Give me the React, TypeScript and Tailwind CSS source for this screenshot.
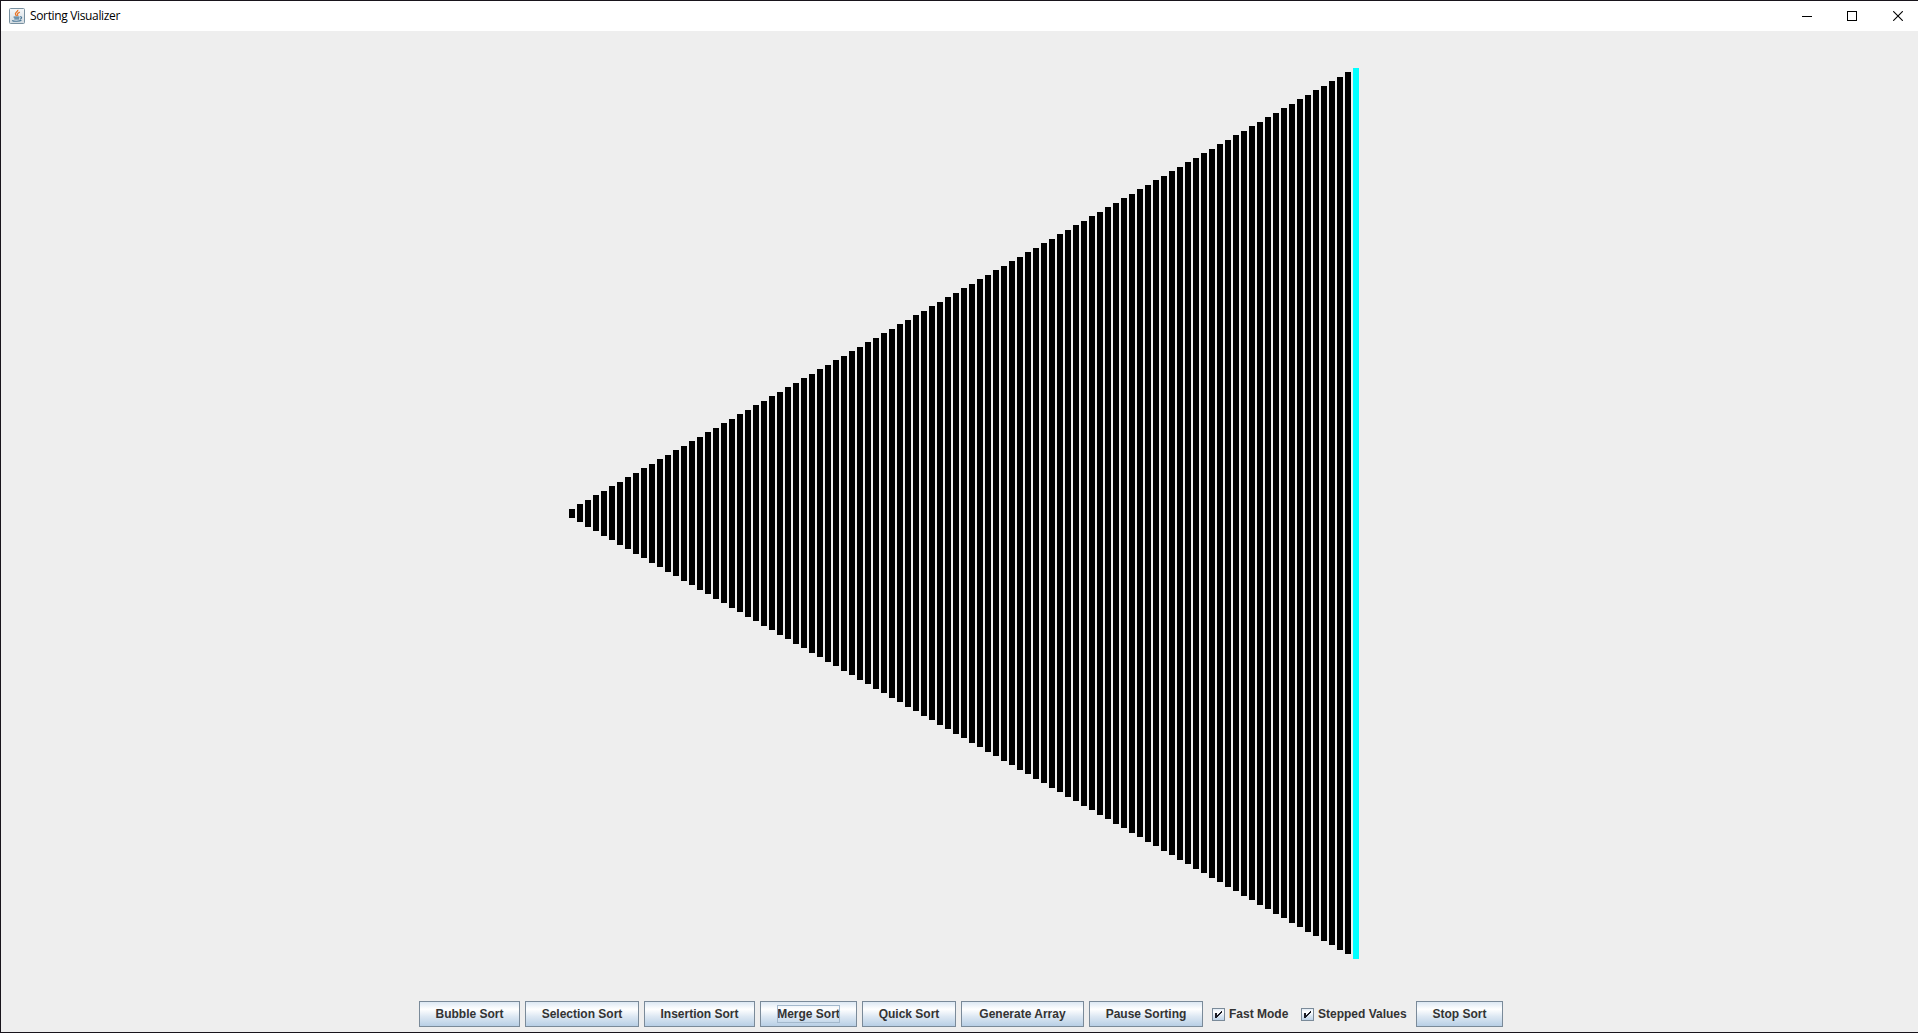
import React from "react";

const heights = Array.from({ length: 99 }, (_, i) => (i + 1) * 9);

function JavaIcon() {
  return (
    <svg className="ml-2 h-4 w-4 shrink-0" viewBox="0 0 16 16" fill="none">
      <defs>
        <linearGradient id="tile" x1="0" y1="0" x2="0" y2="1">
          <stop offset="0" stopColor="#f6f8fa" />
          <stop offset="1" stopColor="#d3dbe1" />
        </linearGradient>
      </defs>
      <rect x=".5" y=".5" width="15" height="15" rx="1" fill="url(#tile)" stroke="#7890a0" />
      <path d="M8.8 1.8C9.3 4 5.2 4.4 6.6 6.7L7.6 8.2M10.8 4.2C8.3 5.2 7.8 6 9 8" stroke="#e8772b" strokeWidth="1.3" />
      <path d="M4.6 9.1h5.9M5.3 10.9h4.8M11 8.8c2.3-.4 2.1 1.8-.2 2.4M3.2 12.5c1.4 1.2 7.7 1 9.2-.2" stroke="#4b7898" strokeWidth="1.1" />
    </svg>
  );
}

function SortButton({ label, width, focused = false }: { label: string; width: string; focused?: boolean }) {
  return (
    <button
      className={`${width} flex h-[26px] shrink-0 items-center justify-center whitespace-nowrap border border-[#7a8a99] bg-[linear-gradient(to_bottom,#dde8f3_0%,#ffffff_30%,#dde8f3_60%,#b8cfe5_100%)]`}
    >
      <span className={`flex h-[18px] items-center ${focused ? "outline outline-1 -outline-offset-1 outline-[#a3b8cc]" : ""}`}>
        {label}
      </span>
    </button>
  );
}

function Check({ label, width }: { label: string; width: string }) {
  return (
    <label className={`${width} flex shrink-0 items-center gap-1 whitespace-nowrap pl-1`}>
      <svg className="h-[13px] w-[13px] shrink-0" viewBox="0 0 13 13" shapeRendering="crispEdges">
        <defs>
          <linearGradient id="box" x1="0" y1="0" x2="0" y2="1">
            <stop offset="0" stopColor="#dde8f3" />
            <stop offset=".3" stopColor="#ffffff" />
            <stop offset=".6" stopColor="#dde8f3" />
            <stop offset="1" stopColor="#b8cfe5" />
          </linearGradient>
        </defs>
        <rect x=".5" y=".5" width="12" height="12" fill="url(#box)" stroke="#7a8a99" />
        <path d="M3 5h2v5H3zM5 7h1v2H5zM6 6h1v2H6zM7 5h1v2H7zM8 4h1v2H8zM9 3h1v2H9z" fill="#1c1c24" />
      </svg>
      <span>{label}</span>
    </label>
  );
}

export default function App() {
  return (
    <div className="flex h-[1033px] w-[1918px] flex-col overflow-hidden border-y border-l border-[#18141b] bg-[#eeeeee]">
      <header className="flex h-[30px] shrink-0 items-center bg-white">
        <JavaIcon />
        <span className="ml-[5px] font-['Open_Sans',sans-serif] text-[12px] leading-[16px] tracking-[-0.35px] text-black">
          Sorting Visualizer
        </span>
        <div className="ml-auto flex items-center pr-[15px]">
          <svg className="mr-[35px] h-[10px] w-[10px]" viewBox="0 0 10 10" shapeRendering="crispEdges">
            <path d="M0 5h10v1H0z" />
          </svg>
          <svg className="mr-9 h-[10px] w-[10px]" viewBox="0 0 10 10" shapeRendering="crispEdges">
            <rect x=".5" y=".5" width="9" height="9" fill="none" stroke="#000" />
          </svg>
          <svg className="h-[10px] w-[10px]" viewBox="0 0 10 10">
            <path d="M.2.2l9.6 9.6M9.8.2L.2 9.8" stroke="#000" strokeWidth="1.1" />
          </svg>
        </div>
      </header>

      <main className="flex h-[965px] shrink-0 items-start gap-[2px] pl-[568px]">
        {heights.map((h, i) => (
          <div
            key={h}
            className={`w-[6px] shrink-0 ${i === 98 ? "bg-[#00ffff]" : "bg-black"}`}
            style={{ height: h, marginTop: 482 - Math.floor(h / 2) }}
          />
        ))}
      </main>

      <footer className="flex h-[36px] items-center gap-[5px] pl-[418px] font-['Liberation_Sans',Arial,sans-serif] text-[12px] font-bold leading-[14px] text-[#333333]">
        <SortButton label="Bubble Sort" width="w-[101px]" />
        <SortButton label="Selection Sort" width="w-[114px]" />
        <SortButton label="Insertion Sort" width="w-[111px]" />
        <SortButton label="Merge Sort" width="w-[97px]" focused />
        <SortButton label="Quick Sort" width="w-[94px]" />
        <SortButton label="Generate Array" width="w-[123px]" />
        <SortButton label="Pause Sorting" width="w-[114px]" />
        <Check label="Fast Mode" width="w-[84px]" />
        <Check label="Stepped Values" width="w-[114px]" />
        <SortButton label="Stop Sort" width="w-[87px]" />
      </footer>
    </div>
  );
}
